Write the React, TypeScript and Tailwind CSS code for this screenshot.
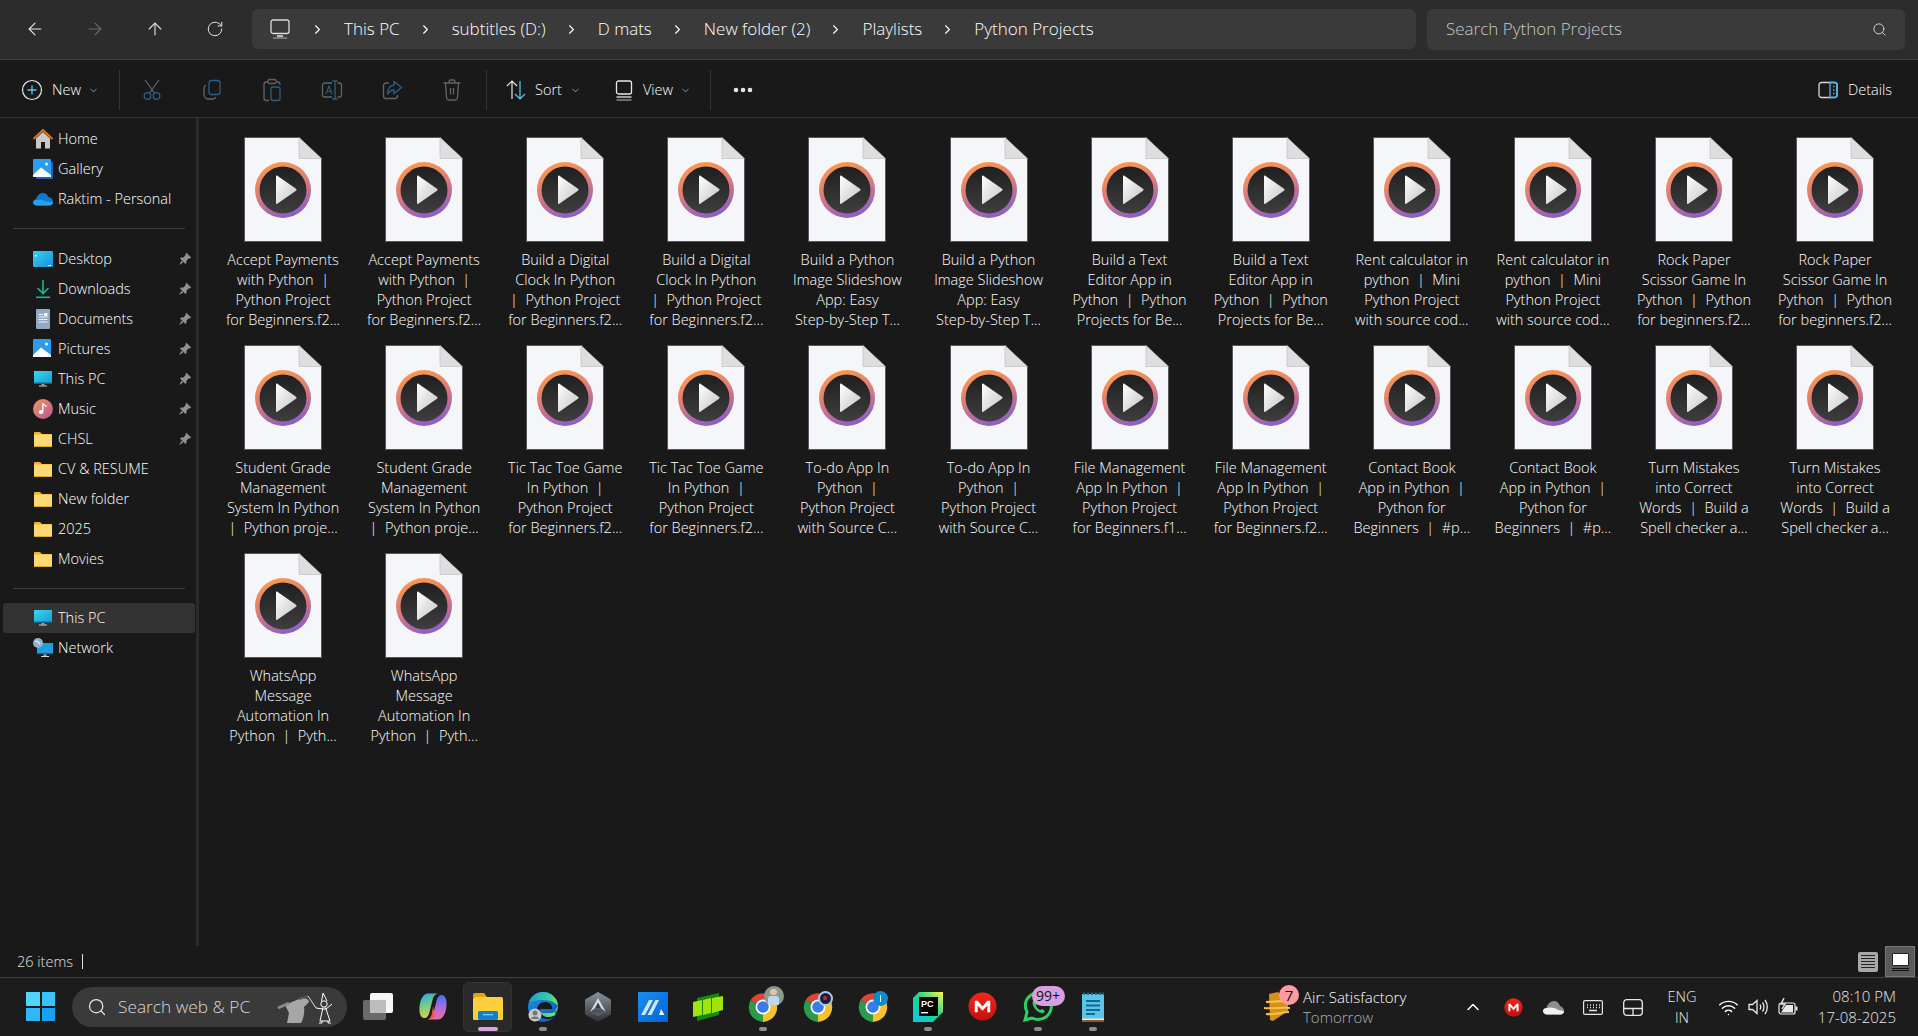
import React from "react";
import { ArrowLeft, ArrowRight, ArrowUp, RotateCw, ChevronRight, ChevronDown, ChevronUp, Search, Ellipsis, Wifi } from "lucide-react";

type Label = string[];
const cols: Label[] = [
  ["Accept Payments", "with Python  |", "Python Project", "for Beginners.f2..."],
  ["Build a Digital", "Clock In Python", "|  Python Project", "for Beginners.f2..."],
  ["Build a Python", "Image Slideshow", "App: Easy", "Step-by-Step T..."],
  ["Build a Text", "Editor App in", "Python  |  Python", "Projects for Be..."],
  ["Rent calculator in", "python  |  Mini", "Python Project", "with source cod..."],
  ["Rock Paper", "Scissor Game In", "Python  |  Python", "for beginners.f2..."],
  ["Student Grade", "Management", "System In Python", "|  Python proje..."],
  ["Tic Tac Toe Game", "In Python  |", "Python Project", "for Beginners.f2..."],
  ["To-do App In", "Python  |", "Python Project", "with Source C..."],
  ["File Management", "App In Python  |", "Python Project", "for Beginners.f1..."],
  ["Contact Book", "App in Python  |", "Python for", "Beginners  |  #p..."],
  ["Turn Mistakes", "into Correct", "Words  |  Build a", "Spell checker a..."],
  ["WhatsApp", "Message", "Automation In", "Python  |  Pyth..."],
];
const files: Label[] = cols.flatMap((c) => {
  if (c[0] === "File Management") return [c, [c[0], c[1], c[2], "for Beginners.f2..."]];
  return [c, c];
});

function FileIcon() {
  return (
    <svg width="78" height="105" viewBox="0 0 78 105" className="block">
      <defs>
        <linearGradient id="ringg" x1="0.25" y1="0" x2="0.6" y2="1">
          <stop offset="0" stopColor="#ff9a48" />
          <stop offset="0.5" stopColor="#dc7a7c" />
          <stop offset="1" stopColor="#8a5cc8" />
        </linearGradient>
        <linearGradient id="darkg" x1="0" y1="0" x2="0" y2="1">
          <stop offset="0" stopColor="#1f1f1f" />
          <stop offset="1" stopColor="#3e3e40" />
        </linearGradient>
        <linearGradient id="playg" x1="0" y1="0" x2="1" y2="1">
          <stop offset="0" stopColor="#fff" />
          <stop offset="1" stopColor="#c4c4c4" />
        </linearGradient>
      </defs>
      <path d="M0.5 0.5H55L77.5 22V104.5H0.5Z" fill="#f4f6f9" stroke="#55585c" />
      <path d="M55 0.5V21.5H77.5Z" fill="#dedede" stroke="#b8b8b8" strokeWidth="0.6" />
      <circle cx="39" cy="53" r="28" fill="url(#ringg)" />
      <circle cx="39" cy="53" r="23.5" fill="url(#darkg)" />
      <path d="M32 39.5C32 38.6 32.5 38.3 33.3 38.8L52 51.8C52.8 52.4 52.8 53.2 52 53.8L33.3 66.8C32.5 67.3 32 67 32 66Z" fill="url(#playg)" />
    </svg>
  );
}

function Pin() {
  return (
    <svg width="14" height="14" viewBox="0 0 14 14">
      <path d="M8.4 0.8L13.2 5.6L11.9 6.5L10.9 6.3L8.6 8.6L8.4 11L7.4 12L2 6.6L3 5.6L5.4 5.4L7.7 3.1L7.5 2.1ZM3.6 8.8L5.2 10.4L1 13Z" fill="#8b9298" />
    </svg>
  );
}

function Folder() {
  return (
    <svg width="18" height="15" viewBox="0 0 18 15">
      <path d="M0 1a1 1 0 0 1 1-1h5l2 2h10v3H0Z" fill="#f6b01e" />
      <rect x="0" y="2.5" width="18" height="12.5" rx="0.8" fill="#fbd977" />
      <rect x="0" y="14" width="18" height="1" fill="#eaa81c" />
    </svg>
  );
}
function PC() {
  return (
    <svg width="18" height="16" viewBox="0 0 18 16">
      <defs>
        <linearGradient id="pcg" x1="0" y1="0" x2="1" y2="1"><stop offset="0" stopColor="#35d8ee" /><stop offset="1" stopColor="#1c9bd8" /></linearGradient>
      </defs>
      <rect x="0" y="0" width="18" height="12.5" fill="url(#pcg)" />
      <rect x="0" y="11.5" width="18" height="1.5" fill="#16628a" />
      <rect x="7.5" y="13" width="3" height="1.5" fill="#8aa0ac" />
      <rect x="5" y="14.5" width="8" height="1" fill="#cfd6da" />
    </svg>
  );
}
function Picture({ stack }: { stack?: boolean }) {
  return (
    <svg width="20" height="20" viewBox="0 0 20 20">
      {stack && <rect x="3" y="3" width="17" height="17" rx="1" fill="#1d62b5" />}
      <rect x="0" y="0" width="18" height="18" rx="1" fill="#2a9df0" />
      <path d="M0 16L8 8.5L18 16V18H0Z" fill="#fff" />
      <circle cx="13.5" cy="5" r="1.5" fill="#fff" />
    </svg>
  );
}

const sideIcons: Record<string, React.ReactNode> = {
  Home: (
    <svg width="20" height="20" viewBox="0 0 20 20">
      <path d="M3 9.5L10 3L17 9.5V19.5H12V13H8V19.5H3Z" fill="#c9c9c9" />
      <path d="M0.5 10L10 1L19.5 10" fill="none" stroke="#e2711f" strokeWidth="2" />
    </svg>
  ),
  Gallery: <Picture stack />,
  Raktim: (
    <svg width="20" height="14" viewBox="0 0 20 14">
      <path d="M4 13.5C1.8 13.5 0 12 0 10.2C0 8.4 1.5 7.2 3.2 7C4 3.5 6.8 1 9.8 1C12.4 1 14.4 2.6 15.2 5C18 5.2 20 7.4 20 10C20 12 18.4 13.5 16.5 13.5Z" fill="#0f78d4" />
      <path d="M4 13.5C1.8 13.5 0 12 0 10.2C2 7.5 9 7 13 9.5L20 10C20 12 18.4 13.5 16.5 13.5Z" fill="#2aa1ec" />
    </svg>
  ),
  Desktop: (
    <svg width="20" height="16" viewBox="0 0 20 16">
      <defs><linearGradient id="deskg" x1="0" y1="0" x2="1" y2="1"><stop offset="0" stopColor="#35d3ee" /><stop offset="1" stopColor="#1a8ed8" /></linearGradient></defs>
      <rect width="20" height="16" rx="1" fill="url(#deskg)" />
      <rect x="2" y="4" width="1.5" height="1.5" fill="#fff" />
      <rect x="15" y="14" width="3" height="1" fill="#dff" />
    </svg>
  ),
  Downloads: (
    <svg width="20" height="20" viewBox="0 0 20 20">
      <path d="M10 1V14M4.5 9L10 14.5L15.5 9" fill="none" stroke="#1fb58f" strokeWidth="1.6" />
      <rect x="3" y="17.5" width="14" height="1.6" fill="#1fb58f" />
    </svg>
  ),
  Documents: (
    <svg width="20" height="20" viewBox="0 0 20 20">
      <rect x="3" y="0" width="14" height="20" rx="1" fill="#8fa9c7" />
      <path d="M5.5 5.5H10M5.5 8H14.5M5.5 10.5H14.5M5.5 13H14.5" stroke="#eef3f8" strokeWidth="1" />
      <rect x="11" y="4" width="3.5" height="3" fill="#eef3f8" />
    </svg>
  ),
  Pictures: <Picture />,
  "This PC": <PC />,
  Music: (
    <svg width="20" height="20" viewBox="0 0 20 20">
      <defs><linearGradient id="musg" x1="0" y1="0" x2="1" y2="1"><stop offset="0" stopColor="#f0985a" /><stop offset="1" stopColor="#b7569a" /></linearGradient></defs>
      <circle cx="10" cy="10" r="10" fill="url(#musg)" />
      <path d="M9.8 4.5V12.6" stroke="#fff" strokeWidth="1.4" />
      <path d="M9.8 4.5C11 6 13 6 13 8" stroke="#fff" strokeWidth="1.2" fill="none" />
      <ellipse cx="8" cy="13" rx="2.3" ry="1.9" fill="#fff" />
    </svg>
  ),
  Folder: <Folder />,
  Network: (
    <svg width="20" height="20" viewBox="0 0 20 20">
      <rect x="4" y="5" width="16" height="11" fill="#1f9fdc" />
      <rect x="4" y="15" width="16" height="1.2" fill="#16628a" />
      <rect x="10.5" y="16.2" width="3" height="1.8" fill="#8aa0ac" />
      <rect x="8" y="18" width="8" height="1" fill="#cfd6da" />
      <circle cx="5" cy="5" r="5" fill="#8ab4cf" />
      <path d="M2 3.5C4 2.5 6 4 7 6.5" stroke="#e6f0f6" strokeWidth="1.2" fill="none" />
    </svg>
  ),
};

function SideRow({ icon, label, pin, active }: { icon: string; label: string; pin?: boolean; active?: boolean }) {
  return (
    <div className={`h-[30px] flex items-center ml-[3px] w-[192px] rounded-[3px] ${active ? "bg-[#333333]" : ""}`}>
      <div className="w-[20px] ml-[30px] flex justify-center items-center">{sideIcons[icon]}</div>
      <span className="ml-[5px] text-[14.5px] leading-[20px] text-white whitespace-nowrap">{label}</span>
      {pin && <span className="ml-auto mr-[3px] flex"><Pin /></span>}
    </div>
  );
}

function SideSep({ tight }: { tight?: boolean }) {
  return <div className={`h-px w-[172px] ml-[13px] mt-[14px] bg-[#3d3d3d] ${tight ? "mb-[14px]" : "mb-[15px]"}`} />;
}

const grey = "#626467";
const blue = "#2c5f83";
const toolIcons = {
  plus: (
    <svg width="22" height="22" viewBox="0 0 22 22" fill="none">
      <circle cx="11" cy="11" r="9.5" stroke="#e8e8e8" strokeWidth="1.2" />
      <path d="M11 6.5V15.5M6.5 11H15.5" stroke="#5cc8f5" strokeWidth="1.3" />
    </svg>
  ),
  cut: (
    <svg width="22" height="22" viewBox="0 0 22 22" fill="none">
      <path d="M4 1L13.5 14M18 1L8.5 14" stroke={grey} strokeWidth="1.2" />
      <circle cx="6.5" cy="17" r="3.3" stroke={blue} strokeWidth="1.3" />
      <circle cx="15.5" cy="17" r="3.3" stroke={blue} strokeWidth="1.3" />
    </svg>
  ),
  copy: (
    <svg width="22" height="22" viewBox="0 0 22 22" fill="none">
      <rect x="8" y="1.5" width="11" height="14" rx="2.5" stroke={blue} strokeWidth="1.3" />
      <path d="M5 6C3.8 6.5 3 7.5 3 9V15.5C3 18 5 20 7.5 20H12C13.5 20 14.5 19.2 15 18" stroke={grey} strokeWidth="1.3" />
    </svg>
  ),
  paste: (
    <svg width="22" height="24" viewBox="0 0 22 24" fill="none">
      <path d="M7 4H5.5C4 4 3 5 3 6.5V20C3 21.5 4 22.5 5.5 22.5H8" stroke={grey} strokeWidth="1.3" />
      <path d="M15 4H16.5C18 4 19 5 19 6.5V7" stroke={grey} strokeWidth="1.3" />
      <rect x="7" y="1.5" width="8" height="4" rx="1.5" stroke={grey} strokeWidth="1.3" />
      <rect x="10" y="9" width="9" height="13.5" rx="2" stroke={blue} strokeWidth="1.3" />
    </svg>
  ),
  rename: (
    <svg width="22" height="20" viewBox="0 0 22 20" fill="none">
      <path d="M11 3H3.5C2.3 3 1.5 3.8 1.5 5V15C1.5 16.2 2.3 17 3.5 17H11M16.5 3H18.5C19.7 3 20.5 3.8 20.5 5V15C20.5 16.2 19.7 17 18.5 17H16.5" stroke={grey} strokeWidth="1.3" />
      <path d="M14 1V19M11.5 1H16.5M11.5 19H16.5" stroke={blue} strokeWidth="1.3" />
      <path d="M5 14L8 6L11 14M6 11.5H10" stroke={blue} strokeWidth="1.1" />
    </svg>
  ),
  share: (
    <svg width="22" height="20" viewBox="0 0 22 20" fill="none">
      <path d="M8 3H5C3.5 3 2.5 4 2.5 5.5V16C2.5 17.5 3.5 18.5 5 18.5H14C15.5 18.5 16.5 17.5 16.5 16V15" stroke={grey} strokeWidth="1.3" />
      <path d="M13 1.5L20.5 7.5L13 13.5V10C10 10 8 11.5 6.5 14.5C6.5 9 9 5.5 13 5Z" stroke={blue} strokeWidth="1.3" />
    </svg>
  ),
  trash: (
    <svg width="22" height="22" viewBox="0 0 22 22" fill="none" stroke={grey} strokeWidth="1.3">
      <path d="M2.5 4H19.5M8 4V2.5C8 1.5 8.7 1 9.5 1H12.5C13.3 1 14 1.5 14 2.5V4" />
      <path d="M4.5 4L5.5 18.5C5.6 20 6.5 21 8 21H14C15.5 21 16.4 20 16.5 18.5L17.5 4" />
      <path d="M9.5 9V15.5M12.5 9V15.5" />
    </svg>
  ),
  sort: (
    <svg width="22" height="22" viewBox="0 0 22 22" fill="none">
      <path d="M7 20V2M2 7L7 2L12 7" stroke="#e8e8e8" strokeWidth="1.2" />
      <path d="M15 2V20M10 15L15 20L20 15" stroke="#5cc8f5" strokeWidth="1.2" />
    </svg>
  ),
  view: (
    <svg width="20" height="22" viewBox="0 0 20 22" fill="none" stroke="#e8e8e8" strokeWidth="1.3">
      <rect x="2.5" y="2" width="15" height="13" rx="2" />
      <path d="M2.5 18H17.5" />
      <path d="M2.5 21H17.5" stroke="#9a9a9a" />
    </svg>
  ),
  details: (
    <svg width="20" height="18" viewBox="0 0 20 18" fill="none">
      <rect x="1" y="1.5" width="18" height="15" rx="2.5" stroke="#d8d8d8" strokeWidth="1.3" />
      <path d="M12 1.5H16.5C18 1.5 19 2.5 19 4V14C19 15.5 18 16.5 16.5 16.5H12Z" stroke="#48b5ee" strokeWidth="1.3" />
      <path d="M15 5.5H16.5M15 9H16.5M15 12.5H16.5" stroke="#48b5ee" strokeWidth="1.3" />
    </svg>
  ),
};

function Chev() {
  return <ChevronDown size={11} strokeWidth={1.5} className="text-[#c8c8c8]" />;
}
function ToolCell({ children }: { children: React.ReactNode }) {
  return <div className="w-[60px] flex justify-center items-center">{children}</div>;
}
function ToolSep() {
  return <div className="w-px h-[40px] bg-[#333333]" />;
}

function Crumb({ text }: { text: string }) {
  return (
    <>
      <ChevronRight size={15} strokeWidth={1.8} className="text-white ml-[18px] mr-[19px] shrink-0" />
      <span className="text-[17px] text-white whitespace-nowrap">{text}</span>
    </>
  );
}

function Chrome({ badge }: { badge?: React.ReactNode }) {
  return (
    <div className="relative w-[30px] h-[30px]">
      <svg width="30" height="30" viewBox="0 0 30 30">
        <path d="M15 15L2.5 8A15 15 0 0 1 27.5 8Z" fill="#dd4436" />
        <path d="M15 15L2.5 8A15 15 0 0 0 15 30Z" fill="#2c9a4e" />
        <path d="M15 15L15 30A15 15 0 0 0 27.5 8Z" fill="#f6c12c" />
        <circle cx="15" cy="15" r="7.5" fill="#fff" />
        <circle cx="15" cy="15" r="5.8" fill="#3a7ce8" />
      </svg>
      {badge}
    </div>
  );
}

function Dot() {
  return <div className="absolute left-1/2 -translate-x-1/2 top-[49px] w-[8px] h-[4px] rounded-full bg-[#8c8c8c]" />;
}

function TaskCell({ children, dot }: { children: React.ReactNode; dot?: boolean }) {
  return (
    <div className="relative w-[55px] h-[58px] flex items-center justify-center pb-[1px]">
      {children}
      {dot && <Dot />}
    </div>
  );
}

function Mega({ size }: { size: number }) {
  return (
    <svg width={size} height={size} viewBox="0 0 30 30">
      <defs><linearGradient id="megag" x1="0" y1="0" x2="0" y2="1"><stop offset="0" stopColor="#f0271c" /><stop offset="1" stopColor="#c70f0c" /></linearGradient></defs>
      <circle cx="15" cy="15" r="14.5" fill="url(#megag)" />
      <path d="M7 21V9H10L15 15L20 9H23V21H20V14L15 19.5L10 14V21Z" fill="#fff" />
    </svg>
  );
}

function TrayCell({ children }: { children: React.ReactNode }) {
  return <div className="w-[40px] flex justify-center items-center">{children}</div>;
}

export default function App() {
  return (
    <div className="w-[1918px] h-[1036px] overflow-hidden flex flex-col bg-[#191919] text-white font-light font-['Open_Sans',sans-serif]">
      {/* Address bar */}
      <div className="h-[60px] shrink-0 bg-[#2c2c2c] border-b border-[#3f3f3f] flex items-center pb-px">
        <div className="flex items-center w-[252px] shrink-0 pl-[5px]">
          <div className="w-[60px] flex justify-center"><ArrowLeft size={20} strokeWidth={1.3} className="text-[#e8e8e8]" /></div>
          <div className="w-[60px] flex justify-center"><ArrowRight size={20} strokeWidth={1.3} className="text-[#6a6a6a]" /></div>
          <div className="w-[60px] flex justify-center"><ArrowUp size={20} strokeWidth={1.3} className="text-[#e8e8e8]" /></div>
          <div className="w-[60px] flex justify-center"><RotateCw size={18} strokeWidth={1.3} className="text-[#e8e8e8]" /></div>
        </div>
        <div className="w-[1164px] h-[40px] rounded-[6px] bg-[#3a3a3a] flex items-center pl-[18px] shrink-0">
          <svg width="20" height="20" viewBox="0 0 20 20" fill="none" stroke="#dcdcdc" strokeWidth="1.3" className="shrink-0">
            <rect x="1" y="1" width="18" height="13.5" rx="2" />
            <path d="M7 17H13" strokeWidth="1.6" />
            <path d="M3 19H17" stroke="#999" />
          </svg>
          <ChevronRight size={15} strokeWidth={1.8} className="text-white ml-[20px] mr-[19px] shrink-0" />
          <span className="text-[17px] text-white whitespace-nowrap">This PC</span>
          {["subtitles (D:)", "D mats", "New folder (2)", "Playlists", "Python Projects"].map((t) => (
            <Crumb key={t} text={t} />
          ))}
        </div>
        <div className="ml-[11px] w-[478px] h-[41px] rounded-[6px] bg-[#3a3a3a] flex items-center justify-between pl-[19px] pr-[18px]">
          <span className="text-[17px] text-[#c8c8c8] whitespace-nowrap">Search Python Projects</span>
          <Search size={15} strokeWidth={1.5} className="text-[#d8d8d8]" />
        </div>
      </div>

      {/* Toolbar */}
      <div className="h-[58px] shrink-0 border-b border-[#333333] flex items-center pt-[3px]">
        <div className="flex items-center w-[119px] shrink-0 pl-[21px]">
          {toolIcons.plus}
          <span className="ml-[9px] text-[14.5px]">New</span>
          <span className="ml-[7px]"><Chev /></span>
        </div>
        <ToolSep />
        <div className="flex ml-[2px] w-[364px] shrink-0">
          <ToolCell>{toolIcons.cut}</ToolCell>
          <ToolCell>{toolIcons.copy}</ToolCell>
          <ToolCell>{toolIcons.paste}</ToolCell>
          <ToolCell>{toolIcons.rename}</ToolCell>
          <ToolCell>{toolIcons.share}</ToolCell>
          <ToolCell>{toolIcons.trash}</ToolCell>
        </div>
        <ToolSep />
        <div className="flex items-center ml-[18px]">
          {toolIcons.sort}
          <span className="ml-[8px] text-[14.5px]">Sort</span>
          <span className="ml-[8px]"><Chev /></span>
        </div>
        <div className="flex items-center ml-[33px]">
          {toolIcons.view}
          <span className="ml-[9px] text-[14.5px]">View</span>
          <span className="ml-[7px]"><Chev /></span>
        </div>
        <div className="ml-[19px]"><ToolSep /></div>
        <Ellipsis size={24} strokeWidth={2.6} className="ml-[20px] text-[#e8e8e8]" />
        <div className="ml-auto mr-[26px] flex items-center">
          {toolIcons.details}
          <span className="ml-[10px] text-[14.5px]">Details</span>
        </div>
      </div>

      {/* Main */}
      <div className="flex-1 min-h-0 flex">
        <div className="w-[196px] shrink-0 pt-[6px]">
          <SideRow icon="Home" label="Home" />
          <SideRow icon="Gallery" label="Gallery" />
          <SideRow icon="Raktim" label="Raktim - Personal" />
          <SideSep />
          <SideRow icon="Desktop" label="Desktop" pin />
          <SideRow icon="Downloads" label="Downloads" pin />
          <SideRow icon="Documents" label="Documents" pin />
          <SideRow icon="Pictures" label="Pictures" pin />
          <SideRow icon="This PC" label="This PC" pin />
          <SideRow icon="Music" label="Music" pin />
          <SideRow icon="Folder" label="CHSL" pin />
          <SideRow icon="Folder" label="CV & RESUME" />
          <SideRow icon="Folder" label="New folder" />
          <SideRow icon="Folder" label="2025" />
          <SideRow icon="Folder" label="Movies" />
          <SideSep tight />
          <SideRow icon="This PC" label="This PC" active />
          <SideRow icon="Network" label="Network" />
        </div>
        <div className="w-[3px] shrink-0 bg-[#2b2b2b]" />
        <div className="flex-1 min-w-0 pl-[13.5px] pt-[19px] grid grid-cols-[repeat(12,141.1px)] auto-rows-[208px] content-start">
          {files.map((lines, i) => (
            <div key={i} className="flex flex-col items-center">
              <FileIcon />
              <div className="mt-[8px] flex flex-col items-center text-[14.5px] leading-[20px] text-white">
                {lines.map((l, j) => (
                  <span key={j} className="whitespace-pre">{l}</span>
                ))}
              </div>
            </div>
          ))}
        </div>
      </div>

      {/* Status bar */}
      <div className="h-[31px] shrink-0 flex items-center pl-[17px] relative">
        <span className="text-[14.5px] text-[#e0e0e0]">26 items</span>
        <div className="ml-[9px] w-px h-[15px] bg-[#e0e0e0]" />
        <div className="ml-auto flex items-center">
          <div className="w-[20px] h-[20px] mr-[7px] rounded-[2px] bg-[#a8a8a8] flex flex-col justify-center gap-[2px] px-[3px]">
            <div className="h-px bg-[#222]" /><div className="h-px bg-[#222]" /><div className="h-px bg-[#222]" /><div className="h-px bg-[#222]" /><div className="h-px bg-[#222]" />
          </div>
          <div className="w-[30px] h-[31px] mr-[3px] bg-[#5a5a5a] border border-[#777] flex items-center justify-center">
            <div className="w-[17px] h-[18px] flex flex-col">
              <div className="h-[13px] bg-white border border-[#222] rounded-[1px]" />
              <div className="h-px mt-[2px] bg-[#111]" />
              <div className="h-px mt-px bg-[#111]" />
            </div>
          </div>
        </div>
      </div>

      {/* Taskbar */}
      <div className="h-[59px] shrink-0 bg-[#1c1c1c] border-t border-[#3f3f3f] flex items-start">
        <div className="w-[55px] ml-[13px] h-[58px] flex items-center justify-center pb-[1px]">
          <div className="w-[29px] h-[29px] grid grid-cols-2 grid-rows-2 gap-[2px]">
            <div className="bg-[#52d3fb]" /><div className="bg-[#3ac3fb]" /><div className="bg-[#2fb7fa]" /><div className="bg-[#14a1f6]" />
          </div>
        </div>
        <div className="ml-[4px] mt-[9px] w-[275px] h-[40px] rounded-full bg-[#3a3a3a] flex items-center pl-[15px] relative">
          <Search size={20} strokeWidth={1.5} className="text-[#e6e6e6]" />
          <span className="ml-[11px] text-[17.3px] text-[#d8d8d8] whitespace-nowrap">Search web & PC</span>
          <svg width="60" height="40" viewBox="0 0 60 40" fill="none" className="absolute right-[10px] top-0">
            <path d="M8 18L22 12C28 10 32 12 32 15L27 20C28 26 26 33 24 36H10L12 26Z" fill="#a6a6a6" />
            <path d="M1 21L12 16" stroke="#8a8a8a" strokeWidth="3" />
            <path d="M22 12L31 9" stroke="#555" strokeWidth="2" />
            <path d="M31 9L39 21" stroke="#ddd" strokeWidth="1" />
            <circle cx="47" cy="17" r="3.2" stroke="#fff" strokeWidth="1" />
            <path d="M44.5 14.5L46 6L50 14M46 20.5L43 34H53L48.5 20.5M39 21L46 22L49 22L55 17M45 34V36H42M51 34V36H54" stroke="#fff" strokeWidth="1" />
          </svg>
        </div>
        <div className="ml-[3px] flex">
          <TaskCell>
            <svg width="30" height="27" viewBox="0 0 30 27">
              <rect x="0" y="7" width="23" height="20" rx="2" fill="#6a6a6a" />
              <rect x="7" y="0" width="23" height="20" rx="2" fill="#f6f6f6" />
              <rect x="7" y="7" width="16" height="13" rx="1" fill="#bdbdbd" />
            </svg>
          </TaskCell>
          <TaskCell>
            <svg width="28" height="27" viewBox="0 0 28 27">
              <defs>
                <linearGradient id="cop1" x1="0.2" y1="0" x2="0.5" y2="1"><stop offset="0" stopColor="#2fa8ee" /><stop offset="0.55" stopColor="#7fd07a" /><stop offset="1" stopColor="#f5c93c" /></linearGradient>
                <linearGradient id="cop2" x1="0.5" y1="0" x2="0.6" y2="1"><stop offset="0" stopColor="#3a74f0" /><stop offset="0.55" stopColor="#b36ae0" /><stop offset="1" stopColor="#f26a9a" /></linearGradient>
              </defs>
              <path d="M9 0.5H19C16 1 14.5 3 13.5 7L10.5 19C9.5 23 8 25.5 4.5 25C1.5 24 0 20 0.5 14C1 7 4 0.5 9 0.5Z" fill="url(#cop1)" />
              <path d="M19 26.5H9C12 26 13.5 24 14.5 20L17.5 8C18.5 4 20 1.5 23.5 2C26.5 3 28 7 27.5 13C27 20 24 26.5 19 26.5Z" fill="url(#cop2)" />
              <path d="M14 13L13 20C12.5 23 11.5 25 9 26.5C12 27 15 25 15.5 21Z" fill="#ef5a3a" />
            </svg>
          </TaskCell>
          <div className="relative w-[55px] h-[58px] flex items-center justify-center pb-[1px]">
            <div className="absolute left-[3px] top-[4px] w-[49px] h-[50px] rounded-[5px] bg-[#2a2a2a] border border-[#333]" />
            <svg width="30" height="27" viewBox="0 0 30 27" className="relative">
              <path d="M0 2a2 2 0 0 1 2-2h9l3 4H0Z" fill="#e8a40c" />
              <rect x="0" y="4" width="30" height="23" rx="1.5" fill="#fcd03c" />
              <rect x="5" y="18" width="20" height="9" rx="1.5" fill="#1380c8" />
              <rect x="10" y="21" width="10" height="1.3" fill="#7cc8f0" />
            </svg>
            <div className="absolute left-[17.5px] top-[49px] w-[20px] h-[4px] rounded-full bg-[#dda0e0]" />
          </div>
          <TaskCell dot>
            <svg width="30" height="30" viewBox="0 0 30 30">
              <defs>
                <linearGradient id="edg" x1="0" y1="0" x2="1" y2="0.4"><stop offset="0" stopColor="#1a9bd8" /><stop offset="0.6" stopColor="#35c8a8" /><stop offset="1" stopColor="#6fe06a" /></linearGradient>
                <linearGradient id="edb" x1="0" y1="0" x2="1" y2="1"><stop offset="0" stopColor="#1f8ee0" /><stop offset="1" stopColor="#0f5bb0" /></linearGradient>
              </defs>
              <circle cx="15" cy="15" r="15" fill="url(#edb)" />
              <path d="M1 10C3 4 9 0 15 0C24 0 30 7 30 14C30 18 27 21 23 21H13C13 23 16 25 20 25C23 25 25 24 27 23V19L30 14C29 12 24 8 15 8C9 8 4 9 1 10Z" fill="url(#edg)" />
              <path d="M12 17H24C25 13 21 10 17 10C12 10 9 14 9 18C9 23 13 27 19 27C23 27 25 26 27 24C24 25 21 25 19 25C15 25 12 21 12 17Z" fill="#1a1a1a" />
              <circle cx="7" cy="23" r="6.5" fill="#c9c9c9" />
              <circle cx="7" cy="21" r="2.5" fill="#777" />
              <path d="M3 27C3 23.5 11 23.5 11 27Z" fill="#777" />
            </svg>
          </TaskCell>
          <TaskCell>
            <svg width="26" height="30" viewBox="0 0 26 30">
              <defs><linearGradient id="hexg" x1="0" y1="0" x2="0" y2="1"><stop offset="0" stopColor="#8a939c" /><stop offset="1" stopColor="#2a2f34" /></linearGradient></defs>
              <path d="M13 0L26 7.5V22.5L13 30L0 22.5V7.5Z" fill="url(#hexg)" />
              <path d="M13 6L21 20L16 16H10L5 20Z" fill="#d5dbe0" />
              <path d="M13 10.5L16 16H10Z" fill="#3a4046" />
              <path d="M5 20L13 24L21 20L13 21Z" fill="#5a6068" />
            </svg>
          </TaskCell>
          <TaskCell>
            <div className="w-[30px] h-[30px] bg-[linear-gradient(135deg,#1a90f0,#0060d8)] flex items-center justify-center">
              <svg width="24" height="16" viewBox="0 0 24 16">
                <path d="M0 16L8 1H12L4 16ZM6.5 16L14.5 1H18L10.5 16Z" fill="#cfe6ff" />
                <path d="M18 16L20 10L23.5 16Z" fill="#e8f3ff" />
              </svg>
            </div>
          </TaskCell>
          <TaskCell>
            <svg width="30" height="28" viewBox="0 0 30 28">
              <path d="M4 5L26 0V22L4 28Z" fill="#118a0e" />
              <path d="M0 9L9 7V22L0 24Z" fill="#a0e40c" />
              <path d="M10 7L18 5V20L10 22Z" fill="#a0e40c" />
              <path d="M19 5L30 3V17L19 20Z" fill="#a0e40c" />
            </svg>
          </TaskCell>
          <TaskCell dot>
            <Chrome badge={
              <div className="absolute -right-[6px] -top-[6px] w-[20px] h-[20px] rounded-full bg-[#8c9a8e] overflow-hidden flex flex-col items-center">
                <div className="w-[7px] h-[7px] rounded-full bg-[#e3c4a8] mt-[3px]" />
                <div className="w-[11px] h-[10px] mt-[1px] rounded-t-[3px] bg-[#bcd8ea]" />
              </div>
            } />
          </TaskCell>
          <TaskCell>
            <Chrome badge={
              <div className="absolute right-0 -top-[1px] w-[15px] h-[15px] rounded-full bg-[#16233a] border-2 border-[#a9cce8] flex items-center justify-center">
                <div className="w-[4px] h-[4px] rounded-full bg-[#d6204a]" />
              </div>
            } />
          </TaskCell>
          <TaskCell>
            <Chrome badge={
              <div className="absolute right-0 -top-[1px] w-[15px] h-[15px] rounded-full bg-[#0f8ad2] flex items-center justify-center">
                <div className="w-px h-[7px] bg-[#dff]" />
              </div>
            } />
          </TaskCell>
          <TaskCell dot>
            <svg width="30" height="30" viewBox="0 0 30 30">
              <defs><linearGradient id="pyg" x1="0" y1="1" x2="1" y2="0"><stop offset="0" stopColor="#08c2f5" /><stop offset="0.55" stopColor="#21d789" /><stop offset="1" stopColor="#fcf84a" /></linearGradient></defs>
              <path d="M6 0H30V20L20 30H0V6Z" fill="url(#pyg)" />
              <rect x="6" y="5" width="19" height="19" fill="#000" />
              <text x="8" y="15" fontSize="9" fontWeight="700" fill="#fff" fontFamily="'Liberation Sans',sans-serif">PC</text>
              <rect x="8" y="20" width="7" height="1.4" fill="#fff" />
            </svg>
          </TaskCell>
          <TaskCell><Mega size={29} /></TaskCell>
          <TaskCell dot>
            <div className="relative w-[30px] h-[30px]">
              <svg width="30" height="30" viewBox="0 0 30 30" fill="none">
                <path d="M2 28L4 20C1 14 2 7 8 3C14 -1 22 1 26 6C30 12 29 20 23 25C18 28 13 28 9 26Z" stroke="#25d366" strokeWidth="3" />
                <path d="M10 9C9 11 10 15 13 18C16 21 20 22 22 20L20 17L17 18C15 17 13 15 13 13L14 11L12 8Z" fill="#25d366" />
              </svg>
              <div className="absolute left-[9px] -top-[6px] w-[33px] h-[20px] rounded-[10px] bg-[#d9a0e0] text-[#111] font-normal text-[14px] leading-[20px] text-center">99+</div>
            </div>
          </TaskCell>
          <TaskCell dot>
            <svg width="22" height="30" viewBox="0 0 22 30">
              <rect x="0" y="2" width="22" height="25" fill="#5cc4e8" />
              <rect x="0" y="28" width="22" height="2" fill="#8a5a2c" />
              <rect x="0" y="26.5" width="22" height="1.5" fill="#f0e8d8" />
              <path d="M2 0.5V3M6 0.5V3M10 0.5V3M14 0.5V3M18 0.5V3M21 0.5V3" stroke="#1a6f8f" strokeWidth="1.8" />
              <path d="M4 9H18M4 13.5H18M4 18H18M4 22H13" stroke="#126a90" strokeWidth="1.8" />
            </svg>
          </TaskCell>
        </div>

        <div className="ml-[144px] w-[189px] h-[58px] flex items-center relative shrink-0">
          <svg width="26" height="30" viewBox="0 0 26 30" className="mb-[2px]">
            <path d="M5 3L14 1L24 10V20L9 30L6 29Z" fill="#d68f1c" />
            <path d="M2 11C10 11 18 9 25 11M0 17C10 18 18 16 26 17M2 23C10 24 18 21 25 21" stroke="#f5c040" strokeWidth="2.2" fill="none" />
          </svg>
          <div className="absolute left-[15px] top-[7px] w-[20px] h-[20px] rounded-full bg-[#ff9aa2] text-[#111] font-normal text-[15px] leading-[20px] text-center">7</div>
          <div className="ml-[13px] flex flex-col">
            <span className="text-[15px] leading-[20px] text-white whitespace-nowrap">Air: Satisfactory</span>
            <span className="text-[15px] leading-[20px] text-[#b0b0b0] whitespace-nowrap">Tomorrow</span>
          </div>
        </div>

        <div className="flex h-[58px] items-center shrink-0">
          <TrayCell><ChevronUp size={20} strokeWidth={1.8} className="text-white" /></TrayCell>
          <TrayCell><Mega size={19} /></TrayCell>
          <TrayCell>
            <svg width="21" height="15" viewBox="0 0 21 15">
              <path d="M4 14.5C2 14.5 0 13 0 11C0 9 2 8 3.5 8C4.5 4 7.5 1 11 1C14 1 16 3 17 6C19 6.5 21 8.5 21 11C21 13 19.5 14.5 17.5 14.5Z" fill="#8e8e8e" />
              <path d="M4 14.5C2 14.5 0 13 0 11C0 9 2 8 3.5 8C8 6.5 13 8 15 10L21 11C21 13 19.5 14.5 17.5 14.5Z" fill="#f0f0f0" />
            </svg>
          </TrayCell>
          <TrayCell>
            <svg width="20" height="15" viewBox="0 0 20 15" fill="none" stroke="#e6e6e6" strokeWidth="1.2">
              <rect x="0.6" y="0.6" width="18.8" height="13.8" rx="1.5" />
              <path d="M4 5H5M7 5H8M10 5H11M13 5H14M16 5H17M4 7.5H5M7 7.5H8M10 7.5H11M13 7.5H14M16 7.5H17M6 10.5H14" strokeWidth="1.4" />
            </svg>
          </TrayCell>
          <TrayCell>
            <svg width="20" height="17" viewBox="0 0 20 17" fill="none" stroke="#e6e6e6" strokeWidth="1.3">
              <rect x="0.7" y="0.7" width="18.6" height="15.6" rx="3" />
              <path d="M0.7 9.5H19.3M10 9.5V16.3" />
            </svg>
          </TrayCell>
        </div>
        <div className="w-[58px] h-[58px] flex flex-col items-center justify-center text-[14.5px] leading-[21px] text-[#e8e8e8]">
          <span>ENG</span>
          <span>IN</span>
        </div>
        <div className="flex h-[58px] items-center ml-[2px]">
          <div className="w-[30px] flex justify-center"><Wifi size={21} strokeWidth={1.7} className="text-white" /></div>
          <div className="w-[30px] flex justify-center">
            <svg width="21" height="18" viewBox="0 0 21 18" fill="none" stroke="#e8e8e8" strokeWidth="1.3">
              <path d="M1 6.5H4.5L9 2.5V15.5L4.5 11.5H1Z" />
              <path d="M12 6.5C13 8 13 10 12 11.5M14.5 4.5C16.5 7 16.5 11 14.5 13.5M17 2C20 6 20 12 17 16" />
            </svg>
          </div>
          <div className="w-[30px] flex justify-center">
            <svg width="20" height="18" viewBox="0 0 20 18" fill="none">
              <rect x="1" y="5" width="16" height="11" rx="2" stroke="#e8e8e8" strokeWidth="1.2" />
              <rect x="17.5" y="8.5" width="2" height="4" fill="#e8e8e8" />
              <path d="M3 14.5L8 7H15V14.5Z" fill="#e8e8e8" />
              <path d="M6 0L3 6H7L4 11" stroke="#e8e8e8" strokeWidth="1.4" />
            </svg>
          </div>
        </div>
        <div className="ml-auto mr-[22px] h-[58px] flex flex-col items-end justify-center text-[15px] leading-[21px] text-[#e8e8e8]">
          <span>08:10 PM</span>
          <span>17-08-2025</span>
        </div>
      </div>
    </div>
  );
}
